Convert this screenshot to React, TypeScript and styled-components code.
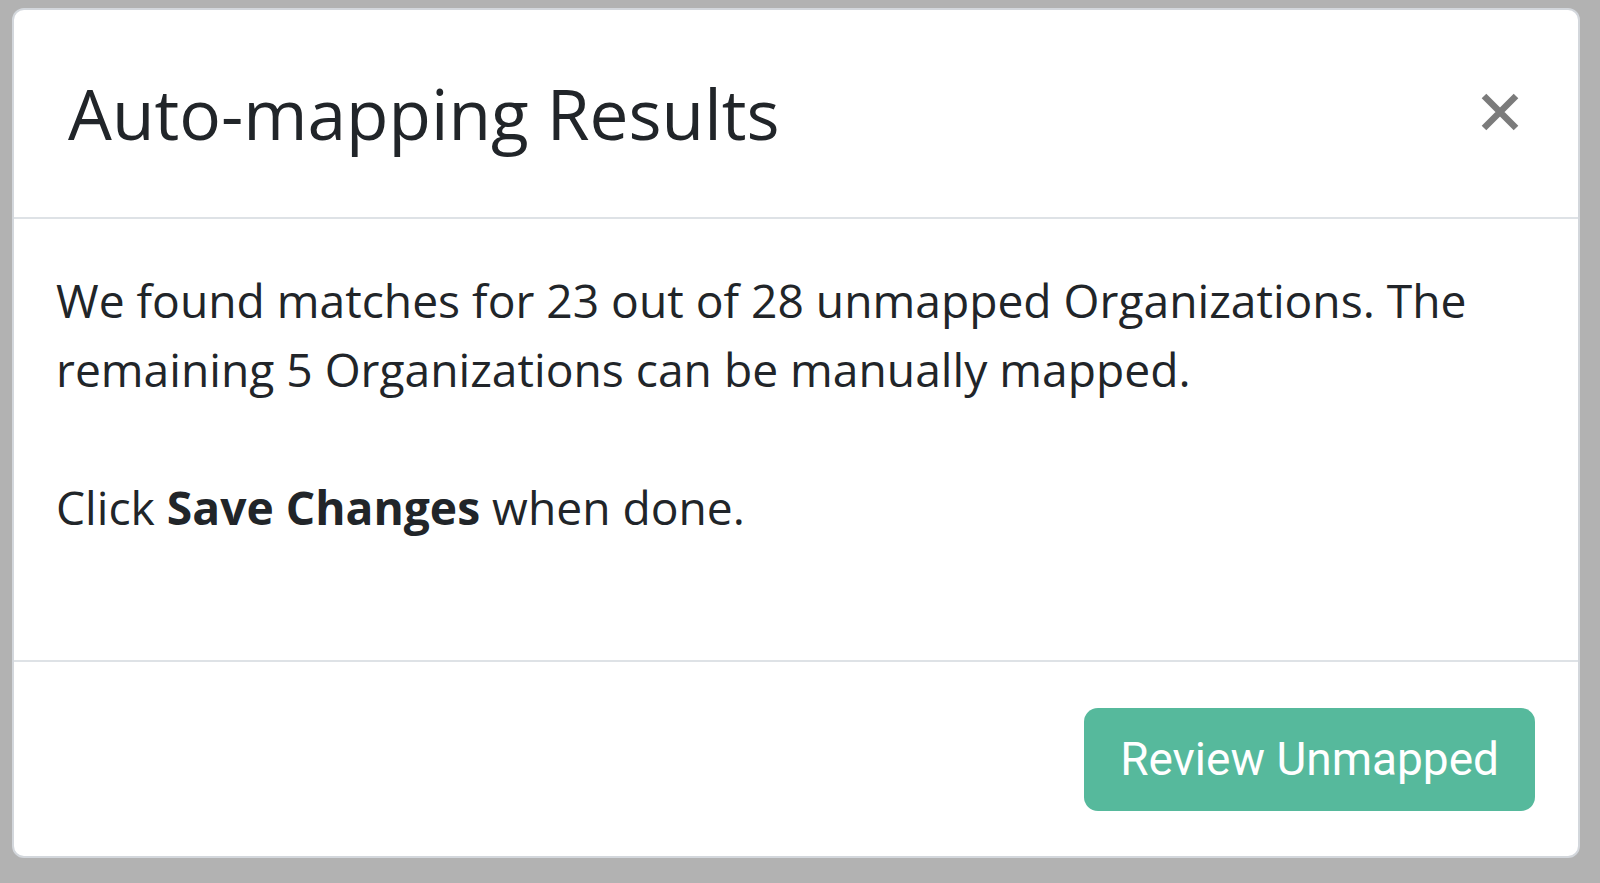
import styled, { createGlobalStyle } from "styled-components";

const GlobalStyle = createGlobalStyle`
    html, body {
        margin: 0;
        padding: 0;
        background: #b2b2b2;
    }
    body {
        font-family: "Open Sans", "Liberation Sans", sans-serif;
        color: #212529;
    }
`

const Backdrop = styled.div`
    box-sizing: border-box;
    width: 1600px;
    height: 883px;
    padding: 8px 20px 25px 12px;
`

const Modal = styled.div`
    box-sizing: border-box;
    height: 100%;
    display: flex;
    flex-direction: column;
    background: #ffffff;
    border: 2px solid #d3d7dc;
    border-radius: 12px;
    overflow: hidden;
`

const ModalHeader = styled.header`
    box-sizing: border-box;
    flex-shrink: 0;
    height: 209px;
    display: flex;
    align-items: center;
    justify-content: space-between;
    padding: 0 58px 0 54px;
    border-bottom: 2px solid #dee2e6;
`

const ModalTitle = styled.h1`
    margin: 0;
    font-size: 69.4px;
    font-weight: 400;
    line-height: 1.2;
    color: #212529;
`

const CloseButton = styled.button`
    width: 40px;
    height: 40px;
    margin-top: -3px;
    padding: 0;
    border: none;
    background: transparent;
    cursor: pointer;
    display: flex;
    align-items: center;
    justify-content: center;
`

const ModalBody = styled.main`
    box-sizing: border-box;
    flex: 1;
    padding: 47px 42px 0 42px;
    border-bottom: 2px solid #dee2e6;
`

const Paragraph = styled.p`
    margin: 0 0 69px;
    font-size: 46.2px;
    line-height: 69px;
`

const ModalFooter = styled.footer`
    box-sizing: border-box;
    flex-shrink: 0;
    height: 194px;
    display: flex;
    align-items: center;
    justify-content: flex-end;
    padding: 0 43px;
`

const PrimaryButton = styled.button`
    box-sizing: border-box;
    height: 103px;
    padding: 0 36px;
    border: none;
    border-radius: 14px;
    background: #56b99c;
    color: #ffffff;
    font-family: Roboto, "Liberation Sans", sans-serif;
    font-size: 46px;
    font-weight: 400;
    cursor: pointer;
`

const CloseIcon = () => (
    <svg width="38" height="38" viewBox="0 0 38 38">
        <path d="M3 3 L35 35 M35 3 L3 35" stroke="#7b7b7b" strokeWidth="6.5" strokeLinecap="butt" />
    </svg>
)

const App = () => {
    return <>
        <GlobalStyle />
        <Backdrop>
            <Modal>
                <ModalHeader>
                    <ModalTitle>Auto-mapping Results</ModalTitle>
                    <CloseButton aria-label="Close"><CloseIcon /></CloseButton>
                </ModalHeader>
                <ModalBody>
                    <Paragraph>
                        We found matches for 23 out of 28 unmapped Organizations. The remaining 5 Organizations can be manually mapped.
                    </Paragraph>
                    <Paragraph>
                        Click <strong>Save Changes</strong> when done.
                    </Paragraph>
                </ModalBody>
                <ModalFooter>
                    <PrimaryButton>Review Unmapped</PrimaryButton>
                </ModalFooter>
            </Modal>
        </Backdrop>
    </>
}

export default App;
